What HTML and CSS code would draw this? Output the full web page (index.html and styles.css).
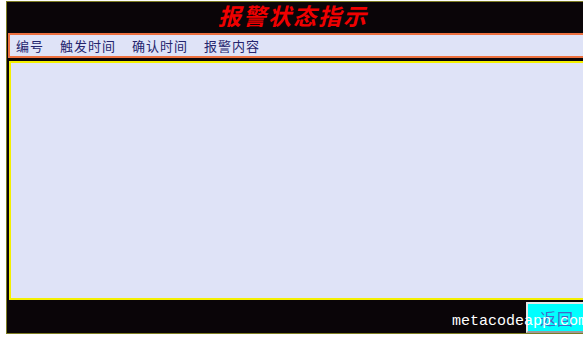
FILE: index.html
```html
<!DOCTYPE html>
<html lang="zh">
<head>
<meta charset="utf-8">
<title>报警状态指示</title>
<link rel="stylesheet" href="styles.css">
</head>
<body>
<div class="frame">
  <div class="title">报警状态指示</div>
  <div class="head">
    <span class="col">编号</span>
    <span class="col">触发时间</span>
    <span class="col">确认时间</span>
    <span class="col">报警内容</span>
  </div>
  <div class="list"></div>
  <div class="foot">
    <button class="back">返回</button>
  </div>
</div>
<div class="watermark">metacodeapp.com</div>
</body>
</html>
```
FILE: styles.css
```css
html, body {
  margin: 0;
  padding: 0;
  background: #ffffff;
  width: 583px;
  height: 339px;
  overflow: hidden;
  position: relative;
}
.frame {
  margin: 1px 0 0 6px;
  width: 600px;
  height: 331px;
  border: 1px solid #7d7d22;
  background: #0a0508;
  display: flex;
  flex-direction: column;
}
.title {
  height: 31px;
  padding-left: 211px;
  color: #f00000;
  font-family: "Noto Sans CJK SC", sans-serif;
  font-weight: bold;
  font-style: italic;
  font-size: 23px;
  letter-spacing: 2px;
  line-height: 27px;
}
.head {
  margin-left: 1px;
  width: 570px;
  height: 21px;
  border: 2px solid #ec7040;
  background: #dfe3f7;
  display: flex;
  align-items: center;
  gap: 16px;
  padding-left: 6px;
  box-sizing: content-box;
  font-family: "Noto Sans CJK SC", sans-serif;
  font-size: 13px;
  letter-spacing: 1px;
  color: #25256e;
}
.list {
  margin: 3px 0 0 2px;
  height: 235px;
  border: 2px solid #f4f000;
  background: #dfe3f7;
}
.foot {
  flex: 1;
  display: flex;
  align-items: flex-end;
  padding-left: 519px;
}
.back {
  width: 60px;
  height: 31px;
  margin: 0;
  padding: 0 0 0 12px;
  text-align: left;
  border: 2px solid;
  border-color: #e6e6e6 #9a9a9a #9a9a9a #e6e6e6;
  background: #00ffff;
  color: #4466c8;
  font-family: "Noto Sans CJK SC", sans-serif;
  font-size: 16px;
  letter-spacing: 1px;
}
.watermark {
  position: absolute;
  left: 452px;
  top: 313px;
  color: #ffffff;
  font-family: "Liberation Mono", monospace;
  font-size: 15px;
  line-height: 18px;
  white-space: nowrap;
}
```
